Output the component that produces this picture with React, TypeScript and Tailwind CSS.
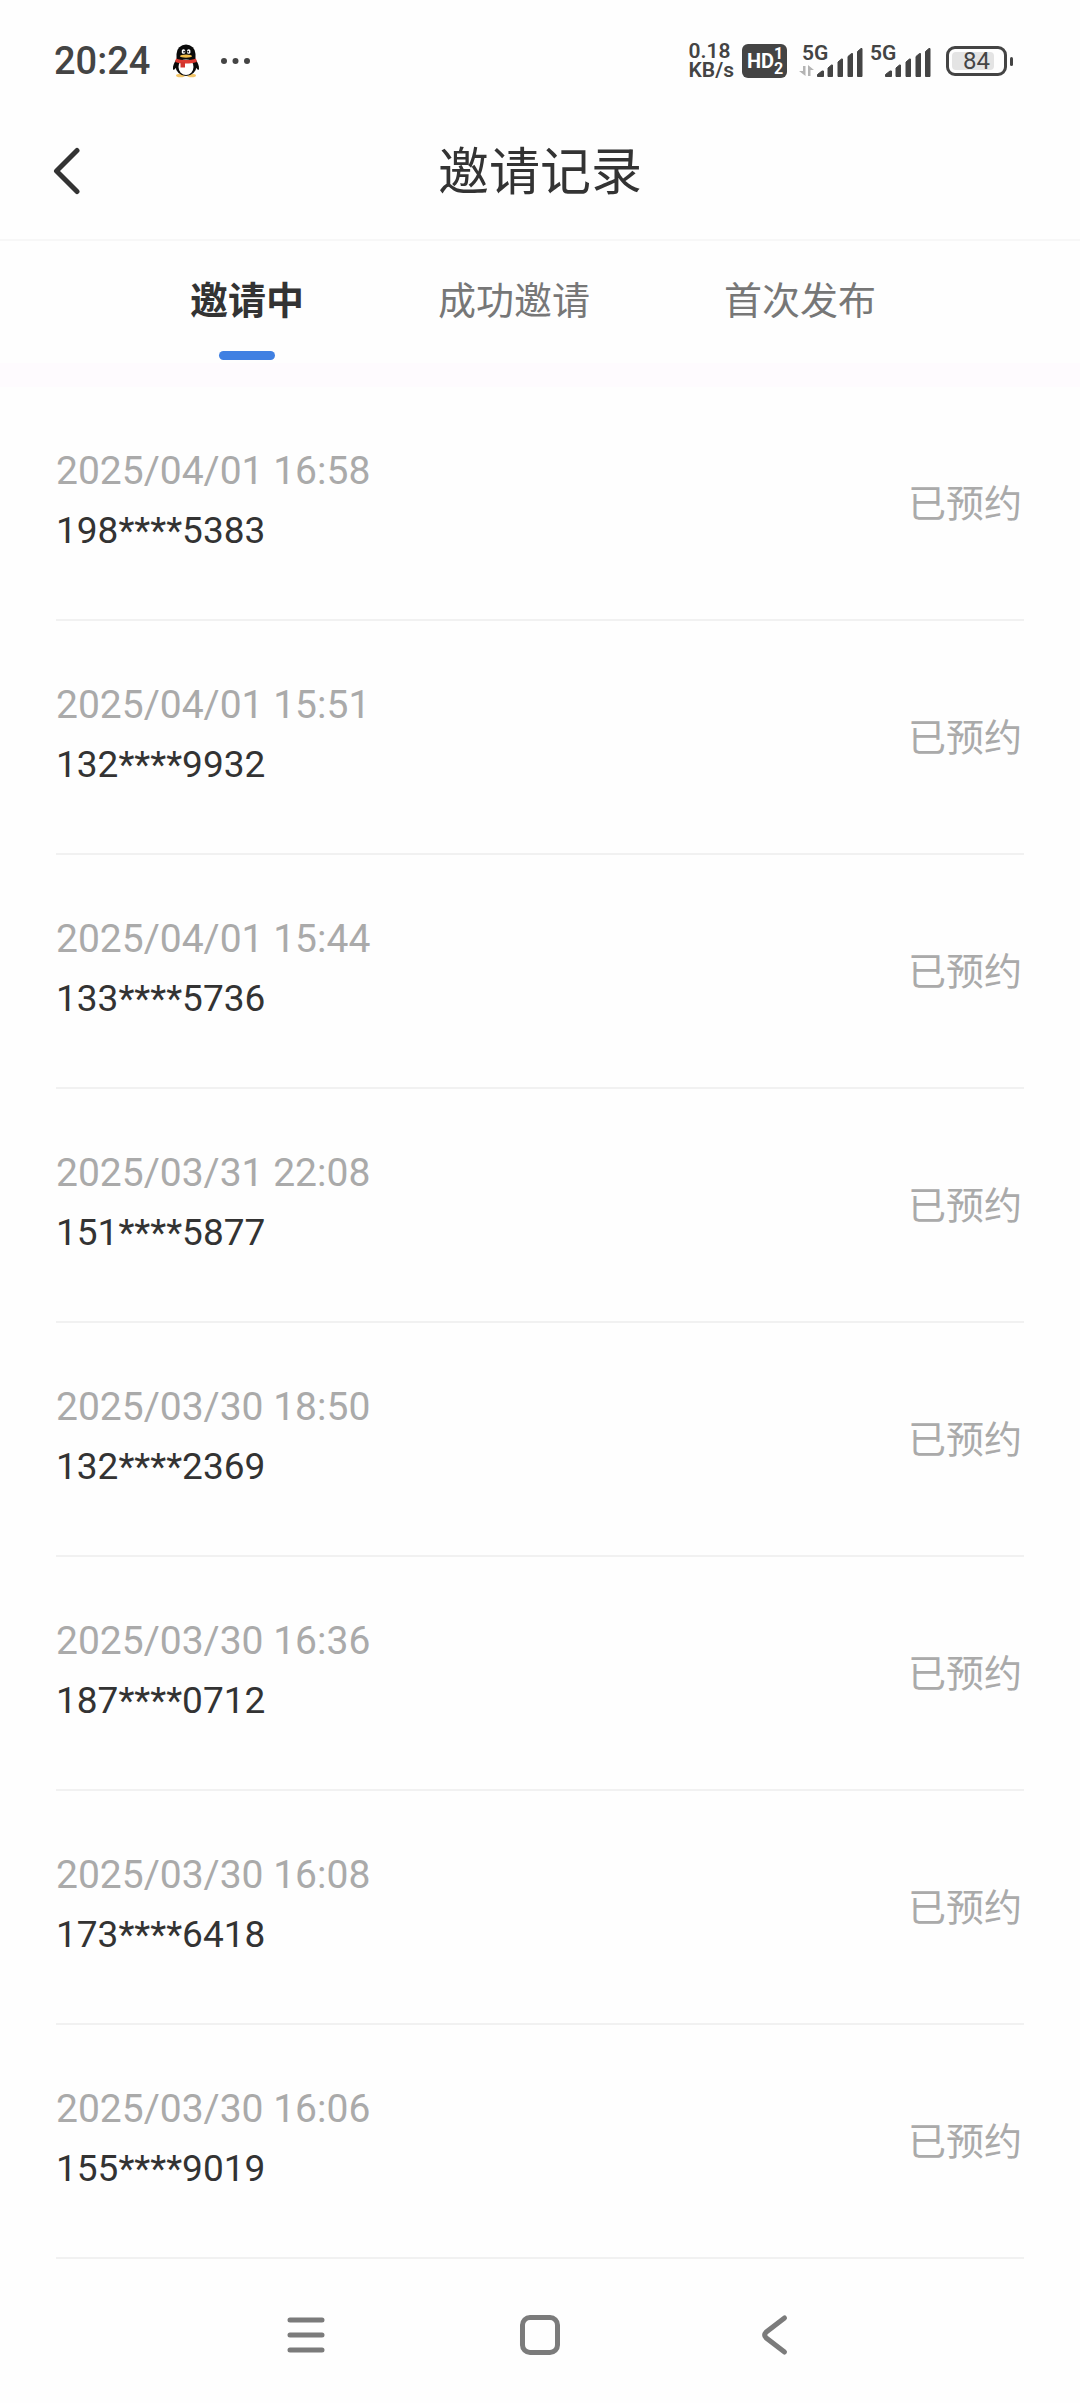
import { useState } from "react";

const records = [
  { time: "2025/04/01 16:58", phone: "198****5383" },
  { time: "2025/04/01 15:51", phone: "132****9932" },
  { time: "2025/04/01 15:44", phone: "133****5736" },
  { time: "2025/03/31 22:08", phone: "151****5877" },
  { time: "2025/03/30 18:50", phone: "132****2369" },
  { time: "2025/03/30 16:36", phone: "187****0712" },
  { time: "2025/03/30 16:08", phone: "173****6418" },
  { time: "2025/03/30 16:06", phone: "155****9019" },
];

const tabs = ["邀请中", "成功邀请", "首次发布"];

function Penguin() {
  return (
    <svg width="28" height="34" viewBox="0 0 28 34" aria-hidden="true">
      <ellipse cx="8.5" cy="31.5" rx="4.500" ry="1.800" fill="#f3c66a" />
      <ellipse cx="19.5" cy="31.5" rx="4.500" ry="1.800" fill="#f3c66a" />
      <path d="M4.5 15C2.5 18 .6 22 1 25c.2 1.600 1.500.8 3-1.200h20c1.500 2 2.800 2.800 3 1.200.4-3-1.500-7-3.500-10z" fill="#0a0a0a" />
      <ellipse cx="14" cy="22" rx="10.500" ry="10" fill="#0a0a0a" />
      <ellipse cx="14" cy="23" rx="7.500" ry="8" fill="#fff" />
      <path d="M4.500 15.500V10a9.500 9.500 0 0 1 19 0v5.500z" fill="#0a0a0a" />
      <rect x="9.800" y="5.200" width="3.400" height="4.600" rx="1.500" fill="#fff" />
      <rect x="15" y="5.200" width="3.400" height="4.600" rx="1.500" fill="#fff" />
      <circle cx="12.100" cy="7.700" r=".9" fill="#111" />
      <circle cx="16.200" cy="7.700" r=".9" fill="#111" />
      <ellipse cx="14" cy="12.200" rx="6" ry="1.600" fill="#f0bd4a" />
      <path d="M4 14.500c6 2 14 2 20 0l.8 3.500c-4 1.200-7 1.500-10.800 1.500S6.500 19 3.200 18z" fill="#df3a32" />
      <path d="M8.500 18H13v5.500H8.500z" fill="#d2352e" />
    </svg>
  );
}

function Signal({ arrows = false }: { arrows?: boolean }) {
  return (
    <div className="relative h-9 w-16">
      <span className="absolute top-0 left-[3px] text-[21px] leading-5 font-semibold">5G</span>
      <svg width="64" height="36" viewBox="0 0 64 36" aria-hidden="true">
        {arrows && (
          <g fill="#b4b4b4">
            <path d="M4 23h2.500v10L0 28h4z" />
            <path d="M9 33h2.500v-6H15L9 22z" />
          </g>
        )}
        <g fill="#444" stroke="#444" strokeLinejoin="round">
          <path d="M18.500 33.500v-2l4.500-3.500h1.500v5.500z" />
          <path d="M29 33.500V25l3.500-3h1v11.500z" />
          <path d="M39 33.500V19l3.500-3h1v17.500z" />
          <path d="M49 33.500V13.500l3.500-3h1v23z" />
          <path d="M58.500 33.500V8.500l3.500-3h1v28z" />
        </g>
      </svg>
    </div>
  );
}

function StatusBar() {
  return (
    <div className="flex h-[102px] items-center justify-between pt-5 pr-[67px] pl-[54px] text-[#444]">
      <div className="flex items-center">
        <time className="text-[38px] leading-10 font-medium">20:24</time>
        <div className="ml-[22px]">
          <Penguin />
        </div>
        <svg className="ml-5" width="32" height="8" viewBox="0 0 32 8" fill="#444" aria-hidden="true">
          <circle cx="4" cy="4" r="3" />
          <circle cx="15.500" cy="4" r="3" />
          <circle cx="27" cy="4" r="3" />
        </svg>
      </div>
      <div className="flex items-center">
        <p className="text-[21px] leading-[19px] font-semibold">
          0.18
          <br />
          KB/s
        </p>
        <div className="ml-2 flex h-[34px] w-[45px] items-center justify-center rounded-md bg-[#444] font-bold text-white">
          <span className="text-xl">HD</span>
          <span className="w-2 text-base leading-[15px] break-all">12</span>
        </div>
        <div className="ml-3 flex gap-1">
          <Signal arrows />
          <Signal />
        </div>
        <div className="ml-[15px] flex items-center gap-[3px]">
          <div className="flex h-[30px] w-[61px] rounded-[9px] border-3 border-[#444] p-[3px]">
            <div className="flex w-[42px] items-center justify-end rounded-sm bg-[#e4e4e4] pr-1 text-2xl leading-6">
              84
            </div>
          </div>
          <div className="h-[9px] w-[3px] rounded-full bg-[#444]" />
        </div>
      </div>
    </div>
  );
}

export default function App() {
  const [active, setActive] = useState(0);
  return (
    <div className="flex min-h-screen flex-col bg-[#fefefe] font-[Roboto,'Noto_Sans_CJK_SC',sans-serif] text-[#333]">
      <StatusBar />
      <header className="grid h-[139px] grid-cols-[1fr_auto_1fr] items-center border-b-2 border-[#f7f7f7]">
        <button type="button" aria-label="返回" className="ml-[51px] w-8">
          <svg width="32" height="48" viewBox="0 0 32 48" fill="none" stroke="#333" strokeWidth="5" strokeLinecap="round" strokeLinejoin="round">
            <path d="M26 3.500 5.500 24 26 44.500" />
          </svg>
        </button>
        <h1 className="pt-1 text-[51px] leading-none">邀请记录</h1>
      </header>
      <div role="tablist" className="flex justify-center gap-[134px] pt-9 pr-3.5 pb-[3px]">
        {tabs.map((name, i) => (
          <button
            key={name}
            type="button"
            role="tab"
            aria-selected={i === active}
            onClick={() => setActive(i)}
            className={`flex flex-col items-center text-[38px] leading-[48px] ${
              i === active ? "font-bold text-[#333]" : "text-[#777]"
            }`}
          >
            {name}
            <span className={`mt-[26px] h-[9px] w-14 rounded-full ${i === active ? "bg-[#4080e2]" : ""}`} />
          </button>
        ))}
      </div>
      <div className="h-6 bg-[#fefbfe]" />
      <ul className="mx-14">
        {records.map((r) => (
          <li key={r.time} className="flex h-[234px] items-center justify-between border-b-2 border-[#f1f1f1]">
            <div className="pb-1">
              <p className="text-[39px] leading-[60px] text-[#aaa]">{r.time}</p>
              <p className="text-[37px] leading-[60px]">{r.phone}</p>
            </div>
            <span className="pt-0.5 pr-0.5 text-[38px] leading-none text-[#aaa]">已预约</span>
          </li>
        ))}
      </ul>
      <nav className="mt-auto flex h-[136px] items-center justify-center gap-[186px]">
        <button type="button" aria-label="最近任务">
          <svg width="48" height="48" viewBox="0 0 48 48" stroke="#7b7b7b" strokeWidth="5" strokeLinecap="round">
            <path d="M8 9h32M8 24h32M8 39h32" />
          </svg>
        </button>
        <button type="button" aria-label="主屏幕">
          <svg width="48" height="48" viewBox="0 0 48 48" fill="none" stroke="#7b7b7b" strokeWidth="5">
            <rect x="6.500" y="6.500" width="35" height="35" rx="7.500" />
          </svg>
        </button>
        <button type="button" aria-label="后退">
          <svg width="48" height="48" viewBox="0 0 48 48" fill="none" stroke="#7b7b7b" strokeWidth="5" strokeLinecap="round">
            <path d="M34.500 7 16 21.200Q13.200 24 16 26.800L34.500 41" />
          </svg>
        </button>
      </nav>
    </div>
  );
}
